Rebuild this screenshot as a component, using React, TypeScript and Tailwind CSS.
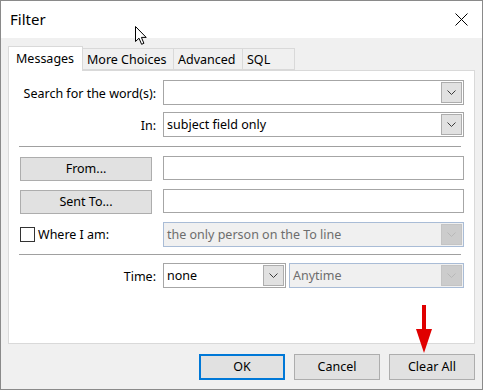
import React from 'react';

const font = { fontFamily: '"Noto Sans", "Open Sans", Arial, sans-serif' };

const Chevron = ({ disabled }: { disabled?: boolean }) => (
  <svg width="9" height="6" viewBox="0 0 9 6" className="block">
    <path d="M0.5 0.5 L4.5 4.5 L8.5 0.5" fill="none" stroke={disabled ? '#b8b8b8' : '#3c3c3c'} strokeWidth="1" />
  </svg>
);

// Windows-style combobox with the little grey dropdown button on the right
const Combo = ({
  value,
  width,
  disabled,
}: {
  value?: string;
  width: string;
  disabled?: boolean;
}) => (
  <div
    className={`${width} h-[25px] shrink-0 flex items-center border ${
      disabled ? 'border-[#a9bcd6] bg-[#f0f0f0] text-[#6d6d6d]' : 'border-[#a6a6a6] bg-white text-black'
    }`}
  >
    <div className="flex-1 pl-[3px] text-[12.5px] leading-[16px] whitespace-nowrap overflow-hidden">{value}</div>
    <div
      className={`w-[21px] h-[21px] mr-[1px] shrink-0 flex items-center justify-center border ${
        disabled ? 'border-[#c4c4c4] bg-[#cccccc]' : 'border-[#adadad] bg-[#e1e1e1]'
      }`}
    >
      <Chevron disabled={disabled} />
    </div>
  </div>
);

const Input = () => <div className="w-[301px] h-[24px] shrink-0 border border-[#a6a6a6] bg-white" />;

const GreyButton = ({ label }: { label: string }) => (
  <button className="w-[132px] h-[24px] mt-[1px] shrink-0 border border-[#adadad] bg-[#e1e1e1] text-[12.5px] leading-none text-black">
    {label}
  </button>
);

const Label = ({ text }: { text: string }) => (
  <div className="w-[143px] shrink-0 text-right pr-[7px] pt-[2px] text-[12.5px] leading-[16px] whitespace-nowrap text-black">
    {text}
  </div>
);

const Tab = ({ label, active, width }: { label: string; active?: boolean; width: string }) =>
  active ? (
    <div
      className={`${width} h-[25px] pl-[7px] pt-[4px] border border-b-0 border-[#d9d9d9] bg-white text-[12.5px] leading-[15px] whitespace-nowrap relative z-10 -mb-px`}
    >
      {label}
    </div>
  ) : (
    <div
      className={`${width} h-[22px] pl-[4px] pt-[3px] border border-l-0 border-[#d9d9d9] bg-[#f0f0f0] text-[12.5px] leading-[15px] whitespace-nowrap`}
    >
      {label}
    </div>
  );

const Cursor = () => (
  <svg className="absolute left-[135px] top-[26px]" width="14" height="20" viewBox="0 0 14 20">
    <path
      d="M0.5 0.5 L0.5 15.5 L4 12.2 L6.6 18.3 L8.9 17.3 L6.4 11.4 L11.2 11.4 Z"
      fill="#fff"
      stroke="#000"
      strokeWidth="1"
      strokeLinejoin="miter"
    />
  </svg>
);

const RedArrow = () => (
  <svg className="absolute left-[415px] top-[305px]" width="18" height="49" viewBox="0 0 18 49">
    <rect x="7" y="0" width="4" height="26" fill="#e00000" />
    <path d="M1 24 L17 24 L9 48 Z" fill="#e00000" />
  </svg>
);

export default function App() {
  return (
    <div className="w-[483px] h-[390px] bg-[#3a3a3a] relative" style={font}>
      <div className="w-[483px] h-[390px] border border-[#8a8a8a] bg-[#f0f0f0] flex flex-col">
        {/* title bar */}
        <div className="h-[37px] bg-white flex items-center justify-between shrink-0">
          <div className="pl-[9px] text-[15px] text-black">Filter</div>
          <svg className="mr-[14px]" width="13" height="13" viewBox="0 0 13 13">
            <path d="M0.5 0.5 L12.5 12.5 M12.5 0.5 L0.5 12.5" stroke="#000" strokeWidth="1" />
          </svg>
        </div>

        {/* tabs */}
        <div className="flex items-end pl-[7px] h-[32px] shrink-0">
          <Tab label="Messages" active width="w-[75px]" />
          <Tab label="More Choices" width="w-[91px]" />
          <Tab label="Advanced" width="w-[69px]" />
          <Tab label="SQL" width="w-[52px]" />
        </div>

        {/* tab panel */}
        <div className="mx-[7px] h-[274px] border border-[#d9d9d9] bg-white flex flex-col pt-[9px] pl-[11px]">
          <div className="flex items-center">
            <Label text="Search for the word(s):" />
            <Combo width="w-[301px]" />
          </div>
          <div className="flex items-center mt-[7px]">
            <Label text="In:" />
            <Combo width="w-[301px]" value="subject field only" />
          </div>
          <div className="h-px w-[442px] bg-[#a0a0a0] mt-[9px] -ml-[1px]" />
          <div className="flex items-start w-[444px] mt-[9px]">
            <GreyButton label="From..." />
            <div className="w-[11px] shrink-0" />
            <Input />
          </div>
          <div className="flex items-start w-[444px] mt-[8px]">
            <GreyButton label="Sent To..." />
            <div className="w-[11px] shrink-0" />
            <Input />
          </div>
          <div className="flex items-center mt-[8px]">
            <div className="w-[143px] shrink-0 flex items-center">
              <div className="w-[15px] h-[15px] border border-[#333] bg-white mr-[3px]" />
              <span className="text-[12.5px] leading-[16px] whitespace-nowrap text-black">Where I am:</span>
            </div>
            <Combo width="w-[301px]" value="the only person on the To line" disabled />
          </div>
          <div className="h-px w-[442px] bg-[#a0a0a0] mt-[7px] -ml-[1px]" />
          <div className="flex items-center mt-[8px]">
            <Label text="Time:" />
            <Combo width="w-[123px]" value="none" />
            <div className="w-[3px] shrink-0" />
            <Combo width="w-[175px]" value="Anytime" disabled />
          </div>
        </div>

        {/* dialog buttons */}
        <div className="flex justify-end gap-[9px] pr-[7px] mt-[10px]">
          <button className="w-[86px] h-[26px] border-2 border-[#0078d7] bg-[#e1e1e1] text-[12.5px] leading-none">OK</button>
          <button className="w-[86px] h-[26px] border border-[#adadad] bg-[#e1e1e1] text-[12.5px] leading-none">Cancel</button>
          <button className="w-[86px] h-[26px] border border-[#adadad] bg-[#e1e1e1] text-[12.5px] leading-none">Clear All</button>
        </div>
      </div>
      <Cursor />
      <RedArrow />
    </div>
  );
}
